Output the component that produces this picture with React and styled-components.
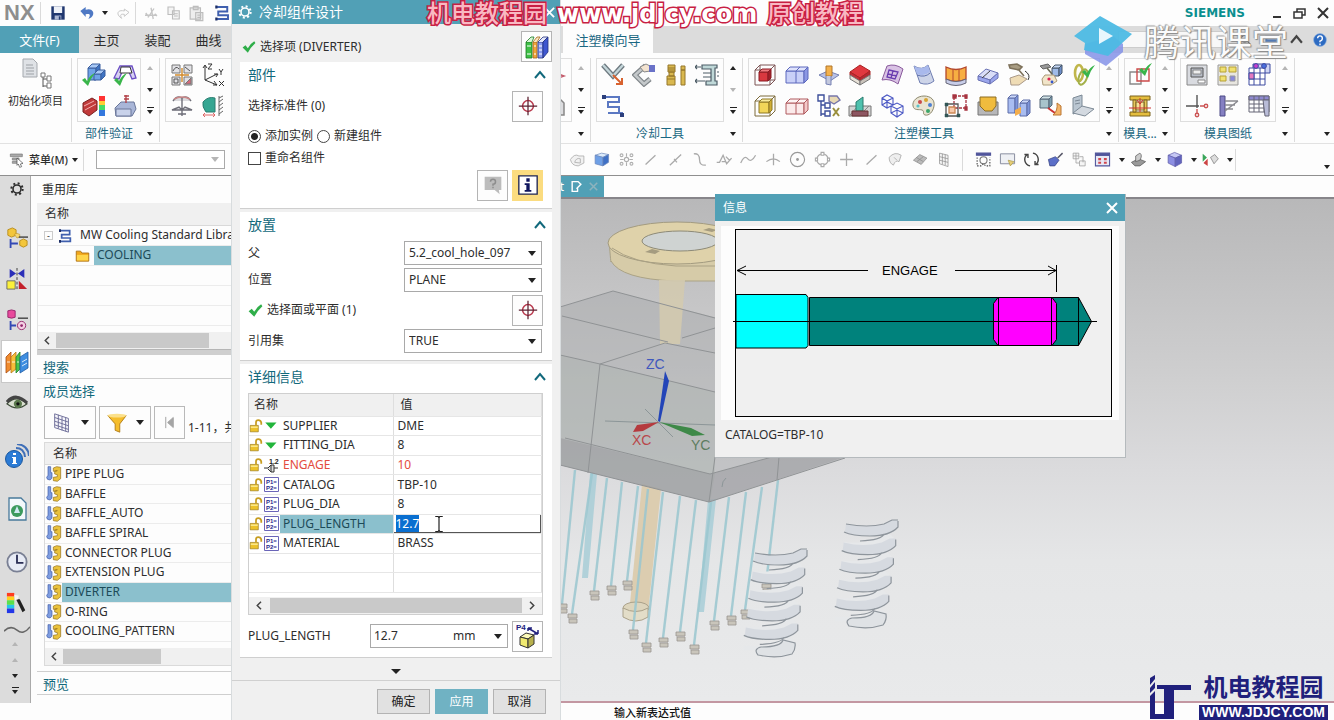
import React, { useEffect, useRef } from "react";
import styled, { createGlobalStyle, css } from "styled-components";

const teal = "#51a0b6";
const selectBlue = "#8bc0cd";
const titleInk = "#12697c";

const GlobalStyle = createGlobalStyle`
  * { box-sizing: border-box; }
  html, body { margin: 0; height: 100%; }
  body {
    font-family: "Noto Sans", "Noto Sans CJK SC", sans-serif;
    font-size: 12px;
    line-height: 16px;
    color: #2d2d2d;
    background: #fdfdfd;
  }
  button, input, select { font: inherit; color: inherit; margin: 0; padding: 0; }
  button { background: none; border: 0; display: flex; align-items: center; justify-content: center; }
  h2, p { margin: 0; font: inherit; }
`;

/* ---------- icons ---------- */

const Svg = styled.svg`
  display: block;
  flex: none;
`;

const Box = ({ x = 3, y = 8, w = 13, h = 12, d = 5, f = "#8fb0e8", t = "#b9d0f5", r = "#6f92d0", s = "#55618c" }) => (
  <g stroke={s} strokeWidth="1" strokeLinejoin="round">
    <rect x={x} y={y} width={w} height={h} fill={f} />
    <path d={`M${x} ${y}l${d} ${-d}h${w}l${-d} ${d}z`} fill={t} />
    <path d={`M${x + w} ${y}l${d} ${-d}v${h}l${-d} ${d}z`} fill={r} />
  </g>
);

const Tick = ({ x = 0, y = 0, c = "#39b54a" }) => (
  <path d={`M${x} ${y + 6}l3-2 2 3q3-6 8-8-5 6-7 13z`} fill={c} />
);

const books = (
  <g strokeWidth=".8">
    <path d="M1 7l5-5v17l-5 4z" fill="#f08c2e" stroke="#a84d13" />
    <path d="M6 7l5-5v17l-5 4z" fill="#f6bd3a" stroke="#b9771b" />
    <path d="M11 7l4-5v17l-4 4z" fill="#49c24b" stroke="#1f7d2b" />
    <path d="M15 7l8-5v16l-8 5z" fill="#3e8ee0" stroke="#235da5" />
    <path d="M2 12h3M7 12h3M12 12h2M17 12l5-3M17 16l5-3" stroke="#fff" />
  </g>
);

const drawings = {
  save: <g><path d="M4 4h16v16H4z" fill="#20376f" /><path d="M7 4h10v8H7z" fill="#eef1f7" /><path d="M8 15h8v5H8z" fill="#aeb9d4" /><path d="M13 16h2v4h-2z" fill="#20376f" /></g>,
  undo: <path d="M2 9l8-6v4c9-3 13 3 11 8-1 3-4 5-7 6 3-5 4-9-4-7v4z" fill="#4f79c4" />,
  redo: <path d="M21 11l-7-5v3c-8-2-11 2-9 6 1 2 3 4 5 5-2-4-3-7 4-6v3z" fill="none" stroke="#c9c9c9" strokeWidth="1.5" />,
  cut: <path d="M4 15h16M12 5l3 15M16 6L8 18M5 12l3 4M17 13l3 3" stroke="#c5c5c5" strokeWidth="1.8" fill="none" />,
  copy: <g fill="#f4f4f4" stroke="#bdbdbd" strokeWidth="1.5"><path d="M4 4h8v10H4zM10 9h9v11h-9z" /><path d="M12 13h5M12 16h5" /></g>,
  paste: <g fill="#eee" stroke="#bdbdbd" strokeWidth="1.5"><path d="M4 5h13v14H4zM8 3h6v4H8zM11 11h9v10h-9z" /><path d="M13 14h5M13 17h5" /></g>,
  cooling: <g fill="none" stroke="#3f5fae" strokeWidth="2.6"><path d="M4 4h15v6H7v5h13v5H4" /><path d="M3 4h3M3 20h3" stroke="#1e2f66" strokeWidth="4" /></g>,
  circuit: <g fill="none" stroke="#5b78c2" strokeWidth="2"><path d="M3 3h15v5H7v5h11v6H7M18 19h4" /><path d="M1 1h4v4H1zM19 19h4v4h-4z" fill="#2c3f7c" stroke="none" /></g>,
  gear: <g fill="none" stroke="currentColor"><circle cx="12" cy="12" r="6" strokeWidth="2.4" /><circle cx="12" cy="12" r="8.5" strokeWidth="3" strokeDasharray="3 3.67" /></g>,
  init: <g><path d="M3 1h10l4 4v14H3z" fill="#dfe2e6" stroke="#a5a9ae" /><path d="M6 7h7M6 10h8M6 13h8M6 16h8" stroke="#9da1a6" /><path d="M23 15v14M23 21h4M23 28h4" stroke="#555" fill="none" /><path d="M21 15h4v4h-4zM27 18h4v5h-4zM27 25h4v5h-4z" fill="#fff" stroke="#777" /></g>,
  partCheck: <g><Box x={6} y={5} w={8} h={12} d={4} f="#6fa3e6" r="#3f74c3" t="#a7c8f5" s="#3b5f9f" /><Box x={12} y={11} w={7} h={6} d={4} f="#6fa3e6" r="#3f74c3" t="#a7c8f5" s="#3b5f9f" /><Tick x={0} y={11} /></g>,
  draftCheck: <g><path d="M7 3h12l4 12-4 1-3-7H9l-3 7-5-1z" fill="#d7d0f3" stroke="#6c4fc4" strokeWidth="1.3" /><path d="M8 4h9l2 6H7z" fill="#fff" stroke="#333" /><Tick x={1} y={11} /></g>,
  heat: <g><path d="M1 9l9-5 5 3v9l-8 6-6-4z" fill="#c13a3a" stroke="#7b2020" /><path d="M2 12l10-5M3 16l11-6" stroke="#f3b0b0" /><path d="M17 2h6v5h-6z" fill="#f33" /><path d="M17 7h6v4h-6z" fill="#fc3" /><path d="M17 11h6v5h-6z" fill="#4d6" /><path d="M17 16h6v6h-6z" fill="#37d" /></g>,
  press: <g><path d="M2 14l6-6h13l2 7-4 7H3z" fill="#a9b6d8" stroke="#6a7799" /><path d="M3 15h15v7H3z" fill="#c9d2ea" stroke="#6a7799" /><path d="M13 1v8M11 2h5M11 5h5" stroke="#b3434a" strokeWidth="1.4" /></g>,
  layout: <g fill="#e2e2e6" stroke="#777"><path d="M2 2h8v8H2zM14 2h8v8h-8zM2 14h8v8H2zM14 14h8v8h-8z" /><path d="M3 8q3-6 6-2M15 4l5 4M4 16h4v4H4z" stroke="#555" fill="none" /><path d="M15 21l6-6v6z" fill="#d46a7a" /><path d="M12 5v14M5 12h14" stroke="#d18a2c" strokeWidth="1.4" /></g>,
  csys: <g fill="none" stroke="#333"><path d="M4 17V3M2 5l2-3 2 3M4 17l12-6M13 11h4l-2 3M4 17l12 5M13 18l3 4h-4" /><path d="M7 1h4l-4 5h4M18 6l2 3 2-3M20 9v3M18 18l5 5M23 18l-5 5" /></g>,
  balance: <g fill="none" stroke="#6e6e78" strokeWidth="1.4"><path d="M12 3v19M3 7q4-6 9-3 5-3 9 3M2 16l7-3 3 3 3-3 7 3zM8 20h8" fill="#d9d9dd" /><path d="M4 5q8-4 16 0" stroke="#c88" /></g>,
  wall: <g><path d="M2 8q5-6 12-4v14H5q-4-5-3-10z" fill="#35a692" stroke="#2c7d70" /><path d="M18 2v20M18 4l4-2M18 8l4-3M18 12l4-3M18 16l4-3M18 20l4-3" stroke="#666" /><path d="M2 21h12M4 19l-2 2 2 2M12 19l2 2-2 2" stroke="#d66" fill="none" /></g>,
  redArrow: <path d="M10 9l11 4-11 4z" fill="#fff" stroke="#c35c6c" strokeWidth="1.5" />,
  house: <path d="M11 21V10l6-5 4 4v12z" fill="#dcdcdf" stroke="#888" strokeWidth="1.5" />,
  pipeX: <g fill="none"><path d="M2 2l10 11L22 2" stroke="#6e7a80" strokeWidth="5" /><path d="M2 2l10 11L22 2" stroke="#c4d6da" strokeWidth="2.4" /><path d="M12 12l9 9M21 15v6h-6" stroke="#d8622f" strokeWidth="2" /></g>,
  elbow: <g fill="none"><path d="M16 7L12 4 3 12l9 9 6-5" stroke="#7f8589" strokeWidth="5" /><path d="M16 7L12 4 3 12l9 9 6-5" stroke="#c4c8ca" strokeWidth="2.6" /><path d="M8 4l6-3 4 2v5l-6 1z" fill="#f3e3d0" stroke="#888" /><path d="M17 2h6v7h-6z" fill="#6a72c8" /></g>,
  plugs: <g fill="#d9b84f" stroke="#95772a"><path d="M4 2h7v7H4zM5 9h5v4H5zM3 13h8v9H3zM17 3h4v4h-4zM17 7h4v15h-4z" /><path d="M4 5h7M4 7h7M3 16h8" /></g>,
  valve: <g fill="none" stroke="#4d5c66" strokeWidth="1.2"><path d="M7 2h15v3h-2v13h2v4H11v-4h5V6H7z" fill="#bfd8d8" /><path d="M0 4h6M0 18h10M2 2L0 4l2 2M2 16l-2 2 2 2M8 10h8M8 14h8M22 9h2M22 13h2" /></g>,
  boxRed: <g fill="none" stroke="#7c5454"><path d="M2 7h15v15H2zM2 7l5-5h15v15l-5 5M22 2l-5 5M7 2v15M7 17h15" /><Box x={6} y={9} w={9} h={9} d={3} f="#d9383f" t="#ef7a7e" r="#a3202a" s="#8a1d25" /></g>,
  boxGold: <g fill="none" stroke="#7c6a3a"><path d="M2 7h15v15H2zM2 7l5-5h15v15l-5 5M22 2l-5 5" /><Box x={6} y={8} w={10} h={11} d={3} f="#f2d659" t="#f9eb9c" r="#d0ae34" s="#8d7724" /></g>,
  splitBlue: <g><Box x={1} y={8} w={18} h={12} d={4} f="#c9d0f8" t="#dfe3fc" r="#8b97e4" s="#5c68bd" /><path d="M11 20V8l4-4" stroke="#5c68bd" fill="none" /></g>,
  splitRed: <g><Box x={1} y={9} w={18} h={11} d={4} f="#fbeaea" t="#fdf3f3" r="#f3c9c9" s="#b05a5f" /><path d="M11 20V9l4-4" stroke="#b05a5f" fill="none" /></g>,
  cross: <g><path d="M2 12l9-4 11 4-9 6z" fill="#b9c2e6" stroke="#7681b4" /><path d="M9 3h6v10H9z" fill="#f3b14c" stroke="#b2762a" /><path d="M9 13v8l5 1v-9" fill="#c3c8dd" stroke="#7681b4" /></g>,
  tree: <g fill="#fff" stroke="#3d4f9b" strokeWidth="1.4"><path d="M4 6v16M4 11h4M4 20h4" /><path d="M1 1h6v6H1zM8 9h5v5H8zM8 17h5v5H8z" /><path d="M12 2h8l3 4-6 4-5-3z" fill="#e8d9b4" stroke="#77a" /><path d="M16 14l6 8M22 14l-6 8" stroke="#9a8f3d" strokeWidth="2" /></g>,
  redTop: <g stroke="#777"><path d="M2 9l10-7 10 6-10 7z" fill="#e0383f" stroke="#a22" /><path d="M2 9v3l10 6v-3z" fill="#c3303a" stroke="#a22" /><path d="M22 8v4l-10 6v-3z" fill="#b22a34" stroke="#a22" /><path d="M2 12v4l10 6v-4z" fill="#e8e2d8" /><path d="M22 12v4l-10 6v-4z" fill="#c9c3bb" /></g>,
  insert: <g><path d="M1 12h22v10H1z" fill="#d4d4d4" stroke="#777" /><path d="M2 21l8-9M12 21l9-9" stroke="#888" /><path d="M8 17V8l7-5v14z" fill="#4fc1ae" stroke="#2a7c6f" /><path d="M4 17h16v5H4z" fill="#8d5662" stroke="#633" /></g>,
  patch: <g><path d="M7 3q8-3 16 3l-5 15Q10 15 2 17z" fill="#d9c2e4" stroke="#8a5b9d" /><path d="M9 7l9 2-3 7-8-2zM13 8l-2 7M8 11l9 2" fill="none" stroke="#6b3db0" strokeWidth="1.3" /></g>,
  wire: <g fill="none" stroke="#4b58c4" strokeWidth="1.1"><path d="M2 4l5-3 6 3v7l-6 3-5-3zM2 4l5 3 6-3M7 7v7M2 11l5-3 6 3M11 12l6-3 6 3v7l-6 4-6-4zM11 12l6 3 6-3M17 15v8M11 19l6-3 6 3" /></g>,
  surface: <g><path d="M2 3q8 5 14-1l6 16q-6 5-14 2z" fill="#cdd4e8" stroke="#6f7eb2" /><path d="M5 12q8 3 13-2" stroke="#5d6fae" fill="none" /><path d="M2 3q8 5 14-1l2 7q-7 5-13 2z" fill="#a9b9ec" /></g>,
  palette: <g><path d="M12 2c7 0 11 4 10 10s-5 10-9 9c-3-1 0-4-3-5s-8 1-9-4S5 2 12 2z" fill="#e9e4d2" stroke="#8d896f" /><circle cx="8" cy="8" r="2" fill="#c94b4b" /><circle cx="14" cy="6" r="2" fill="#d7a534" /><circle cx="18" cy="11" r="2" fill="#4e80d1" /><circle cx="16" cy="17" r="2" fill="#3da66a" /><circle cx="6" cy="12" r="1.6" fill="#5cc2c9" /></g>,
  fence: <g><path d="M2 4q10 5 20 0v12q-10 5-20 0z" fill="#f7ae42" stroke="#b3472c" strokeWidth="1.3" /><path d="M2 16q10 5 20 0v4q-10 5-20 0z" fill="#c8cde8" stroke="#667" /><path d="M9 6v12M15 6v12" stroke="#b3472c" /></g>,
  refsq: <g fill="none" stroke="#a73440" strokeWidth="1.3"><path d="M10 2h12v12H10z" strokeDasharray="3 1" /><path d="M2 10h12v12H2z" stroke="#555" /><path d="M5 13h6v6H5z" fill="#f7c8a9" stroke="#c85" /><path d="M9 1h3v3H9zM21 1h2v3h-2zM21 13h2v3h-2z" fill="#a73440" /><path d="M1 9h3v3H1zM1 20h3v3H1zM13 20h3v3h-3z" fill="#355" stroke="#355" strokeWidth=".5" /></g>,
  slab: <g><path d="M2 13l8-7 12 4-8 7z" fill="#d9ddf7" stroke="#6b73b5" /><path d="M2 13v4l12 4v-4zM14 17v4l8-6v-5z" fill="#9ba6ec" stroke="#6b73b5" /><path d="M6 15l8-7" stroke="#444" /></g>,
  block: <g><path d="M2 8h20v13H2z" fill="#b7b7b9" stroke="#777" /><path d="M4 3h16v9l-4 5H9l-5-5z" fill="#f0bc3e" stroke="#8c6c22" /></g>,
  hammer: <g><path d="M2 2l8-1 5 3-3 3-9-2zM11 6l6 7" stroke="#7e725b" strokeWidth="1.6" fill="#a99d83" /><path d="M3 15l9-3 8 4-8 6H4z" fill="#efdcb5" stroke="#a98" /><path d="M18 8q6 4 3 9" stroke="#333" fill="none" /></g>,
  solids: <g><Box x={1} y={4} w={7} h={15} d={3} f="#a9bdf1" t="#ccd8f9" r="#7e95da" s="#5d6da8" /><Box x={13} y={9} w={7} h={13} d={3} f="#a9bdf1" t="#ccd8f9" r="#7e95da" s="#5d6da8" /><path d="M8 16l6-3v6l-6 3z" fill="#f3ae4d" /></g>,
  hammerCube: <g><Box x={13} y={5} w={7} h={8} d={3} f="#9fbbe8" t="#c7d9f6" r="#6e8ec9" s="#456" /><path d="M1 3l8-2 3 3-8 2z" fill="#999" stroke="#666" /><path d="M8 5l5 6" stroke="#665" strokeWidth="1.6" /><path d="M6 12h9l3 6-6 4H4l-1-6z" fill="#f1e5c9" stroke="#a97" /><circle cx="10" cy="16" r="1.6" fill="#d25" /><circle cx="13" cy="19" r="1.4" fill="#35c" /></g>,
  cubeArrow: <g><Box x={1} y={5} w={9} h={9} d={3} f="#a8c4cc" t="#d1e2e6" r="#7d9fb0" s="#567" /><path d="M9 14l7 5" stroke="#c33" strokeWidth="2" /><path d="M18 9l4 3v9h-8q5-4 4-12z" fill="#f3b56a" stroke="#b73" /></g>,
  linkCheck: <g fill="none"><ellipse cx="8" cy="10" rx="4" ry="8" stroke="#c0b64b" strokeWidth="2.6" /><ellipse cx="12" cy="14" rx="4" ry="8" stroke="#a3b04a" strokeWidth="2" transform="rotate(20 12 14)" /><Tick x={11} y={3} /></g>,
  greyPlates: <g stroke="#7d8a96"><path d="M2 4l9-3v16l-9 3z" fill="#bac6d1" /><path d="M11 12l12 3-9 7-12-3z" fill="#d3d9e0" /><path d="M4 7l5-1M4 10l5-1" /></g>,
  subCheck: <g fill="none" strokeWidth="1.4"><path d="M2 9h11v12H2z" stroke="#888" /><path d="M9 6h12v12H9z" stroke="#cc4a4a" /><Tick x={11} y={1} /></g>,
  moldbase: <g stroke="#7d6420"><path d="M2 2h20v4H2zM2 18h20v4H2z" fill="#e4bd3d" /><path d="M5 6h3v12H5zM16 6h3v12h-3z" fill="#e8c85d" /><path d="M8 8h8v8H8z" fill="#f6e29a" /><path d="M9 6l3 4 3-4M12 4v14M1 14h22" stroke="#c33" fill="none" /></g>,
  sheet1: <g stroke="#888" fill="#d9dbe0"><path d="M2 2h20v20H2z" /><path d="M6 5h12v9H6z" fill="#b7bcc6" stroke="#555" /><path d="M8 7h8v4H8z" fill="#eee" /><path d="M13 17h7v3h-7z" fill="#fff" /></g>,
  sheet2: <g stroke="#999" fill="#e8e6e0"><path d="M2 2h20v20H2z" /><path d="M4 4h6v5H4zM13 4h7v5h-7zM4 13h6v5H4z" fill="#f0e070" stroke="#b5a035" /><path d="M14 13h5v5h-5z" fill="#88d" /></g>,
  sheet3: <g stroke="#3c4aa0" fill="#fff"><path d="M6 1h17v9H6z" fill="#cfd5f4" /><path d="M2 5h16v17H2zM2 10h16M2 16h16M7 5v17M13 5v17" /><path d="M2 10h5v6H2z" fill="#e37ac0" /><circle cx="9" cy="3" r="2.4" fill="#c83dd0" /><circle cx="17" cy="3" r="2.4" fill="#4a6fe0" /></g>,
  crossO: <g fill="none" stroke="#777" strokeWidth="1.4"><path d="M1 12h13M12 1v13" stroke="#555" /><path d="M15 12h4M12 15v4" stroke="#c55" /><circle cx="21" cy="12" r="1.7" stroke="#c55" /><circle cx="12" cy="21" r="1.7" stroke="#c55" /></g>,
  ladder: <g><path d="M4 2h5v20H4z" fill="#8580c2" stroke="#4c4a86" /><path d="M9 7h13M9 11h10M9 15h8M22 7L9 17" stroke="#8a8a90" strokeWidth="1.4" fill="none" /></g>,
  grid: <g stroke="#667" fill="#fff"><path d="M2 2h20v16H2z" /><path d="M2 2h20v4H2z" fill="#8f8ad0" /><path d="M2 10h20M2 14h20M7 2v16M12 2v16M17 2v16" /><path d="M16 6h6v16h-4z" fill="#b9bcd8" /></g>,
  search: <g fill="none" stroke="#666" strokeWidth="2"><circle cx="10" cy="10" r="5" /><path d="M14 14l5 5" /></g>,
  monitor: <g><path d="M2 5h20v12H2z" fill="#4f79b5" /><path d="M5 8h14v3H5z" fill="#cfe0f5" /><path d="M9 17h6v3H9z" fill="#667" /></g>,
  help: <g><circle cx="12" cy="12" r="11" fill="#2d6bc2" stroke="#8fb3e2" /><path d="M8 9q0-4 4-4t4 4-4 5v2M12 18v3" stroke="#fff" strokeWidth="2.4" fill="none" /></g>,
  menu: <g fill="#aaa" stroke="#777"><path d="M2 3h18v4H2z" /><path d="M5 9h10v3H5zM5 14h8v3H5z" /><path d="M12 9l9 8-4 1 2 4-3 1-2-5-2 2z" fill="#fff" stroke="#444" /></g>,
  /* selection bar */
  sGhost: <path d="M2 12q6-9 12-5h7v10l-8 4q-9 0-11-9zM8 16q2-7 8-5v6z" fill="#f1f1f1" stroke="#a2a2a2" />,
  sCube: <g stroke="#6a86bb"><path d="M3 6l9-3 10 2-8 4z" fill="#dcebfb" /><path d="M3 6l11 3v12L3 18z" fill="#6fa0e6" /><path d="M14 9l8-4v11l-8 5z" fill="#3f70c5" /></g>,
  sSnap: <g fill="none" stroke="#b0b0b0" strokeWidth="1.6"><circle cx="12" cy="12" r="3" /><circle cx="5" cy="6" r="2" /><circle cx="19" cy="6" r="2" /><circle cx="5" cy="18" r="2" /><circle cx="19" cy="18" r="2" /><path d="M12 3v5M12 16v5M3 12h5M16 12h5" /></g>,
  sLine: <path d="M5 19L19 6" stroke="#aaa" strokeWidth="1.8" />,
  sMid: <path d="M4 20L20 5M10 11l4 5" stroke="#aaa" strokeWidth="1.8" />,
  sCurve: <path d="M4 4q8-1 8 8t9 8" stroke="#aaa" strokeWidth="1.8" fill="none" />,
  sSpline: <path d="M1 16h4l5-10 5 12 7-8M8 15h6M14 8l5 5" stroke="#aaa" strokeWidth="1.8" fill="none" />,
  sWave: <path d="M1 17q5-12 10-6t11-5" stroke="#aaa" strokeWidth="1.8" fill="none" />,
  sPeak: <path d="M2 15q10-8 19 0M12 4v16" stroke="#aaa" strokeWidth="1.8" fill="none" />,
  sCenter: <g><circle cx="12" cy="12" r="10" fill="none" stroke="#999" strokeWidth="1.6" /><circle cx="12" cy="12" r="2" fill="#999" /></g>,
  sQuad: <g fill="none" stroke="#aaa" strokeWidth="1.6"><circle cx="12" cy="12" r="8" /><path d="M10 2h4v4h-4zM10 18h4v4h-4zM2 10h3v4H2zM19 10h3v4h-3z" fill="#fff" /></g>,
  sPlus: <path d="M3 12h18M12 3v18" stroke="#aaa" strokeWidth="1.8" />,
  sFace: <g fill="#eee" stroke="#aaa" strokeWidth="1.2"><path d="M3 9q8-9 17-3l-3 9q-5-3-8 5-6-3-6-11z" /><path d="M10 9l4 4" /></g>,
  sPlane: <path d="M2 13l9-8 10 5-8 9zM6 9l10 6M7 15l9-7" fill="#bbb" stroke="#8b8b8b" />,
  sGrid: <path d="M5 3l12 3v16L5 18zM5 8l12 3M5 13l12 3M9 4v15M13 5v15" fill="#f5f5f5" stroke="#8c8c8c" />,
  vFit: <g fill="none" stroke="#50559b" strokeWidth="1.5"><path d="M2 3h20v3H2z" fill="#50559b" /><circle cx="12" cy="13" r="5" stroke="#777" /><path d="M3 9v12h6l3-3 3 3h6V9" strokeDasharray="2 2" stroke="#444" /></g>,
  vWin: <g><path d="M2 4h20v14H2z" fill="#eef0f4" stroke="#8a8fa0" strokeWidth="1.4" /><path d="M13 13l8 2-5 6z" fill="#e7ce79" stroke="#a94" /></g>,
  vRot: <path d="M10 21A9 9 0 0 1 6 5M14 3a9 9 0 0 1 4 16M2 5h5v5M22 19h-5v-5" fill="none" stroke="#444" strokeWidth="2" />,
  vBrush: <g><path d="M2 12l10-4 5 5-6 8H4z" fill="#5b6fc8" stroke="#34407e" /><path d="M15 10l7-7" stroke="#556" strokeWidth="2" /></g>,
  vTree: <path d="M3 3h8v8H3zM12 8h5v8M7 11v6h5M12 14h8v7h-8zM3 7h8M7 3v8" fill="#f5f5f5" stroke="#999" />,
  vGrid: <g><path d="M2 3h20v18H2z" fill="#e7e8f5" stroke="#50559b" strokeWidth="1.5" /><path d="M2 3h20v4H2z" fill="#50559b" /><path d="M6 10h4v3H6zM14 10h4v3h-4zM6 15h4v3H6zM14 15h4v3h-4z" fill="#d0454d" /></g>,
  vSolid: <g stroke="#555"><path d="M2 16l10-5 10 4-8 6H7z" fill="#999" /><path d="M8 15V7l6-4q4 3 0 10z" fill="#ccc" /></g>,
  vCube: <g stroke="#5d5ba8"><path d="M3 6l9-4 10 4-9 4z" fill="#c6c8f4" /><path d="M3 6l10 4v12l-10-5z" fill="#8c8ee2" /><path d="M13 10l9-4v11l-9 5z" fill="#6264bd" /></g>,
  vMove: <g><path d="M1 4l6 5-6 6z" fill="#3aa65a" /><path d="M2 17l6-6v10z" fill="#c44" /><path d="M12 9l6-4 5 6-6 7z" fill="#ddd" stroke="#777" /></g>,
  /* resource bar */
  rAsm: <g><path d="M2 3l5-2 4 2v6l-5 2-4-2z" fill="#f3c63c" stroke="#b98c1a" /><path d="M15 15l4-2 4 2v5l-4 2-4-2z" fill="#f3c63c" stroke="#b98c1a" /><path d="M9 8l3-1 3 1v3l-3 1z" fill="#f5d773" stroke="#b98c1a" strokeWidth=".6" /><path d="M5 13v10M5 18h8" stroke="#3349b5" strokeWidth="2" /><path d="M14 11h10" stroke="#333" strokeWidth="1.4" /></g>,
  rCon: <g><path d="M4 1l7 5-7 5zM20 1l-7 5 7 5z" fill="#2b2fb8" /><path d="M12 0v24" stroke="#333" strokeDasharray="3 2" /><path d="M1 14h9v9H1z" fill="#fbf03a" stroke="#666" /><path d="M14 14l9 9h-9z" fill="#c3202a" /></g>,
  rPart: <g><path d="M2 2q4-2 8 0v7q-4 2-8 0z" fill="#e84a9c" stroke="#93256a" /><path d="M13 10h11" stroke="#333" strokeWidth="1.4" /><path d="M5 13v10M5 18h6" stroke="#3349b5" strokeWidth="2" /><circle cx="17" cy="18" r="4.5" fill="#f4d0e4" stroke="#93256a" /><circle cx="17" cy="18" r="1.5" fill="#93256a" /></g>,
  rBooks: books,
  rEye: <g><path d="M1 14q10-11 22 0-11 9-22 0z" fill="#d9dfd0" stroke="#3d4b38" strokeWidth="1.3" /><circle cx="13" cy="14" r="4.5" fill="#5b7a4d" /><circle cx="13" cy="14" r="1.8" fill="#111" /><path d="M1 12Q11 1 23 13" stroke="#444" strokeWidth="3.4" fill="none" /></g>,
  rInfo: <g><circle cx="9" cy="15" r="8.5" fill="#2b7bd5" stroke="#1b589f" /><path d="M8 9h3v2H8zM7 13h4v6h1v1H7v-1h1v-5H7z" fill="#fff" /><path d="M11 4q8 0 9 9M12 0q11 1 12 12" fill="none" stroke="#3f6fb8" strokeWidth="2" /></g>,
  rPage: <g><path d="M4 1h12l5 5v17H4z" fill="#f3f8fb" stroke="#48799b" strokeWidth="1.3" /><circle cx="12" cy="14" r="6" fill="#3c9a5e" /><path d="M12 9l3 7H9z" fill="#cfe9f3" /></g>,
  rClock: <g><circle cx="12" cy="12" r="10.5" fill="#e7ebf5" stroke="#7a8094" strokeWidth="2" /><path d="M12 4v9h7" stroke="#2a2e55" strokeWidth="2" fill="none" /></g>,
  rColor: <g><path d="M1 1h8v4H1z" fill="#ff3b1f" /><path d="M1 5h8v4H1z" fill="#ffd21f" /><path d="M1 9h8v5H1z" fill="#5be04a" /><path d="M1 14h8v4H1z" fill="#23c7e8" /><path d="M1 18h8v5H1z" fill="#2337e8" /><path d="M11 8l4 0 6 12-3 2z" fill="#222" /><path d="M9 3l5 1-1 4-3 1z" fill="#f5f5f5" /></g>,
  rWave: <path d="M0 14q6-6 12-1t12-3" fill="none" stroke="#666" strokeWidth="1.4" />,
  folder: <g><path d="M2 5h7l2 3h11v13H2z" fill="#f2a71b" stroke="#a86f12" strokeWidth="1.4" /><path d="M3 11h18v9H3z" fill="#ffd54a" /></g>,
  tableBtn: <path d="M4 2l15 5v15L4 17zM4 6l15 5M4 10l15 5M4 14l15 5M8 3v15M12 5v15M16 6v15" fill="#f6f6fb" stroke="#6a6a96" />,
  filter: <g><path d="M2 4h20l-7 9v9l-5-2v-7z" fill="#f5bd2c" stroke="#b07b15" /><ellipse cx="12" cy="4" rx="10" ry="2" fill="#fbe08a" /></g>,
  first: <path d="M6 3v18M18 4l-9 8 9 8z" fill="#a5a5a5" stroke="#a5a5a5" strokeWidth="1.6" />,
  part: <g><path d="M3 1h4v9h2v5q1 4-3 6-5 0-5-4l2-3z" fill="#7d9ce0" stroke="#3f5ba8" /><path d="M11 3l5-2 6 1v17l-5 4-6-1v-5l6-1v-3l-4-1v-4l4-1V7l-6 1z" fill="#eac23c" stroke="#8f6d18" /></g>,
  lock: <g><path d="M2 11h14v11H2z" fill="#ecc22c" stroke="#8c6d15" /><path d="M12 11V6q0-4 4-4t5 4v4" fill="none" stroke="#c79d21" strokeWidth="3" /><path d="M3 14h12" stroke="#fff3a8" strokeWidth="2" /></g>,
  greenDown: <path d="M2 7h18l-9 10z" fill="#22b53b" />,
  books2: <g strokeWidth=".8"><path d="M1 7h6v16H1z" fill="#3fc046" stroke="#1d7a25" /><path d="M1 7l5-5h3L7 7" fill="#d8f5d5" stroke="#1d7a25" /><path d="M8 7h4v16H8z" fill="#f0a53a" stroke="#a3681c" /><path d="M8 7l4-5h3l-3 5" fill="#fbe6bf" stroke="#a3681c" /><path d="M13 7h5v16h-5z" fill="#8c9cf0" stroke="#22307f" /><path d="M13 7l5-5h5l-5 5" fill="#e3e7fb" stroke="#22307f" /><path d="M18 7l5-5v15l-5 6z" fill="#3f57d0" stroke="#22307f" /><path d="M2 11h4M2 19h4M9 11h2M9 19h2M14 11h3M14 15h3M14 19h3" stroke="#fff" strokeWidth="1.2" /></g>,
  check: <path d="M1 13l5-4 4 5Q14 6 21 2l2 3Q15 12 10 22z" fill="#2fae49" />,
  target: <g fill="none"><circle cx="12" cy="12" r="6.5" stroke="#b8384c" strokeWidth="1.8" /><path d="M1 12h22M12 1v22" stroke="#5b2030" strokeWidth="1.5" /></g>,
  question: <g><path d="M2 2h20v16h-3l1 5-6-5H2z" fill="#bcbcbc" /><path d="M9 8q0-3 3-3t3 3-3 3v2M12 14v2" stroke="#8d8d8d" strokeWidth="1.8" fill="none" /></g>,
  info: <g><path d="M1 1h22v22H1z" fill="#fff" stroke="#1e2452" strokeWidth="1.6" /><path d="M10 4h4v4h-4zM8 10h6v8h2v2H8v-2h2v-6H8z" fill="#10165e" /></g>,
  docEdit: <g fill="none" stroke="#fff" strokeWidth="2.6"><path d="M15 21H4V3h11l4 4M14 15v6M12 16l9-9" /></g>,
  cursor: <path d="M7 2h4l1 2 1-2h4M12 4v16M7 22h4l1-2 1 2h4" fill="none" stroke="#222" strokeWidth="1.6" />,
};

const Icon = ({ name, size = 24, box = 24 }) => (
  <Svg width={size} height={size} viewBox={`0 0 ${box} ${box}`} aria-hidden="true">{drawings[name]}</Svg>
);

const Caret = styled.span`
  flex: none;
  width: 0;
  height: 0;
  border: 3px solid transparent;
  border-top: 4px solid ${(p) => (p.$dim ? "#b5b5b5" : "#222")};
  border-bottom: 0;
  ${(p) => p.$up && css`transform: rotate(180deg);`}
  ${(p) => p.$mid && css`border-width: 5px 4px 0;`}
  ${(p) => p.$big && css`border-width: 5px 5px 0;`}
`;

const MoreCaret = styled(Caret)`
  position: relative;
  &::before {
    content: "";
    position: absolute;
    left: -3px;
    top: -7px;
    width: 7px;
    height: 1px;
    background: #222;
  }
`;

const Rule = styled.span`
  flex: none;
  width: 1px;
  height: ${(p) => p.$h || 22}px;
  background: #dadada;
`;

/* ---------- frame ---------- */

const Window = styled.div`
  position: relative;
  display: flex;
  flex-direction: column;
  min-height: 100vh;
  overflow: hidden;
`;

const TitleBar = styled.header`
  display: flex;
  align-items: center;
  height: 26px;
  padding-left: 4px;
`;

const Brand = styled.span`
  width: 36px;
  font: bold 22px/24px "Liberation Sans", sans-serif;
  color: #8e8e8e;
`;

const QuickButton = styled.button`
  width: ${(p) => p.$w || 24}px;
  height: 24px;
`;

const Push = styled.span`
  flex: 1;
`;

const Siemens = styled.span`
  margin-right: 20px;
  font: bold 12px/24px "DejaVu Sans", sans-serif;
  color: #0b8f8f;
`;

const WinButton = styled.button`
  width: 23px;
  height: 24px;
  color: #333;
`;

const TabBar = styled.nav`
  display: flex;
  align-items: stretch;
  height: 27px;
  background: #dcdcdc;
`;

const RibbonTab = styled.button`
  width: ${(p) => p.$w || 51}px;
  font-size: 13px;
  ${(p) => p.$file && css`background: ${teal}; color: #fff; margin-right: 2px;`}
  ${(p) => p.$active && css`background: #fdfdfd; color: #1a6782;`}
`;

const CoveredTabs = styled.div`
  width: 329px;
`;

const TabTools = styled.div`
  display: flex;
  align-items: center;
  gap: 10px;
  padding-right: 7px;
`;

const FindBox = styled.input`
  width: 110px;
  height: 17px;
  padding: 0 6px;
  border: 1px solid #ccc;
  background: #f8f8f8;
`;

const Ribbon = styled.section`
  display: flex;
  height: 91px;
  padding-top: 5px;
  border-bottom: 1px solid #e2e2e2;
`;

const LaunchButton = styled.button`
  flex-direction: column;
  justify-content: flex-start;
  gap: 3px;
  width: 72px;
  height: 84px;
  border-right: 1px solid #dcdcdc;
  font-size: 11px;
`;

const Group = styled.div`
  display: grid;
  grid-template-columns: ${(p) => p.$w}px 18px;
  grid-template-rows: 64px 16px;
  row-gap: 4px;
  height: 84px;
  padding-left: 5px;
  border-right: 1px solid #dcdcdc;
`;

const Gallery = styled.div`
  display: grid;
  grid-template-columns: repeat(${(p) => p.$cols}, 1fr);
  grid-auto-rows: 31px;
  border: 1px solid #dedede;
  overflow: hidden;
`;

const Tool = styled.button`
  min-width: 0;
  height: 31px;
`;

const Steps = styled.div`
  display: flex;
  flex-direction: column;
  align-items: center;
  justify-content: space-between;
  padding: 8px 0 8px;
`;

const GroupLabel = styled.span`
  margin: 0 -6px;
  text-align: center;
  color: #1a6782;
  white-space: nowrap;
`;

const Center = styled.span`
  display: flex;
  align-items: center;
  justify-content: center;
`;

const BarEnd = styled.span`
  display: flex;
  align-items: flex-end;
  height: ${(p) => p.$h}px;
  margin-left: auto;
  padding: 0 4px 6px 0;
`;

const RibbonGroup = ({ label, tools, cols, w, up }) => (
  <Group $w={w || cols * 32}>
    <Gallery $cols={cols}>
      {tools.map((t, i) => (t ? <Tool key={i} aria-label={t}><Icon name={t} /></Tool> : <span key={i} />))}
    </Gallery>
    <Steps><Caret $up $dim={!up} /><Caret $dim={up} /><MoreCaret /></Steps>
    <GroupLabel>{label}</GroupLabel>
    <Center><Caret /></Center>
  </Group>
);

const SelectionBar = styled.section`
  display: flex;
  align-items: center;
  height: 32px;
  border-bottom: 1px solid #8f8f8f;
`;

const MenuButton = styled.button`
  gap: 4px;
  width: 84px;
  height: 22px;
  padding-left: 4px;
  border-right: 1px solid #dadada;
  font-size: 11px;
  font-weight: 500;
  white-space: nowrap;
`;

const SelectShell = styled.span`
  position: relative;
  display: flex;
  align-items: center;
  flex: none;
  width: ${(p) => p.$w}px;
  height: ${(p) => p.$h || 24}px;
  border: 1px solid #a9a9a9;
  background: #fff;
  ${Caret} { position: absolute; right: 5px; pointer-events: none; }
`;

const Select = styled.select`
  width: 100%;
  height: 100%;
  padding: 0 4px;
  border: 0;
  appearance: none;
  background: none;
`;

const FilterSlot = styled.div`
  width: 469px;
  padding-left: 12px;
`;

const SnapTools = styled.div`
  display: grid;
  grid-template-columns: repeat(16, minmax(0, 1fr));
  width: 392px;
  margin: 0 5px 0 12px;
`;

const ViewTools = styled.div`
  display: flex;
  align-items: center;
  padding-left: 8px;
`;

const SmallTool = styled.button`
  width: ${(p) => (p.$menu ? 36 : 24)}px;
  height: 24px;
  gap: 8px;
`;

/* ---------- work area ---------- */

const Work = styled.main`
  display: flex;
  flex: 1;
`;

const Rail = styled.nav`
  display: flex;
  flex-direction: column;
  align-items: center;
  flex: none;
  width: 31px;
  background: #dcdcdc;
  border-right: 1px solid #aaa;
`;

const RailButton = styled.button`
  width: 29px;
  height: ${(p) => p.$h}px;
  margin-bottom: ${(p) => p.$after || 0}px;
  padding-left: 2px;
  align-self: flex-end;
  ${(p) => p.$on && css`background: #fff; border: 1px solid #c8c8c8; border-right: 0;`}
`;

const RailSteps = styled(Steps)`
  height: 60px;
  padding: 2px 0 6px;
`;

const Library = styled.aside`
  flex: none;
  width: 529px;
  padding: 0 0 0 6px;
  background: #fdfdfd;
`;

const PanelTitle = styled.h2`
  height: 27px;
  padding: 6px 5px;
`;

const ListHead = styled.div`
  height: ${(p) => p.$h || 22}px;
  padding: 3px 8px;
  background: #f0f0f0;
  border-bottom: 1px solid #d9d9d9;
`;

const Tree = styled.div`
  display: flex;
  flex-direction: column;
  height: 124px;
  border-left: 1px solid #e3e3e3;
  border-bottom: 1px solid #b5b5b5;
`;

const TreeRow = styled.div`
  display: flex;
  align-items: center;
  gap: 4px;
  height: 20px;
  padding-left: ${(p) => p.$indent || 6}px;
  border-bottom: 1px solid #ececec;
  white-space: nowrap;
`;

const RowText = styled.span`
  flex: 1;
  align-self: stretch;
  padding: 1px 3px;
  white-space: nowrap;
  ${(p) => p.$on && css`background: ${selectBlue}; color: #1c4a58;`}
`;

const Toggle = styled.span`
  display: flex;
  align-items: center;
  justify-content: center;
  width: 9px;
  height: 9px;
  border: 1px solid #ccc;
  font-size: 9px;
  line-height: 8px;
`;

const Scroll = styled.div`
  display: flex;
  align-items: center;
  height: 17px;
  margin-top: auto;
  background: #f0f0f0;
`;

const ScrollArrow = styled.button`
  width: ${(p) => p.$w || 18}px;
  height: 17px;
`;

const Thumb = styled.span`
  width: ${(p) => p.$w};
  height: 15px;
  background: #c9c9c9;
`;

const SectionBar = styled.h2`
  height: ${(p) => p.$h || 24}px;
  padding: 4px 6px;
  border-top: ${(p) => p.$top || 1}px solid #cfcfcf;
  font-size: 13px;
  color: ${titleInk};
`;

const MemberTools = styled.div`
  display: flex;
  align-items: center;
  gap: 3px;
  height: 35px;
  padding-left: 7px;
`;

const DropButton = styled.button`
  gap: 8px;
  width: ${(p) => p.$w || 52}px;
  height: 33px;
  border: 1px solid #b9b9b9;
`;

const Count = styled.span`
  align-self: flex-end;
  padding-bottom: 4px;
`;

const Members = styled.div`
  display: flex;
  flex-direction: column;
  height: 224px;
  margin: 2px 0 5px 7px;
  border: 1px solid #dadada;
`;

const MemberRows = styled.div`
  display: flex;
  flex-direction: column;
  height: 177px;
`;

const MemberRow = styled.div`
  display: flex;
  flex: 1;
  align-items: center;
  padding-left: 1px;
  border-bottom: 1px solid #ececec;
`;

const Stage = styled.section`
  display: flex;
  flex-direction: column;
  flex: 1;
  min-width: 0;
`;

const DocTabs = styled.div`
  display: flex;
  height: 23px;
  border-bottom: 2px solid #87858a;
`;

const DocTab = styled.button`
  gap: 6px;
  justify-content: flex-end;
  width: 44px;
  height: 21px;
  padding-right: 6px;
  background: ${teal};
  color: #fff;
`;

const Canvas = styled.div`
  flex: 1;
  min-height: 499px;
  overflow: hidden;
  background: linear-gradient(#b8b8b9, #cfcfd0 36%, #dbdbdd 54%, #e5e6e7 72%, #e9eaeb);
  border-bottom: 2px solid #c397a2;
`;

const StatusBar = styled.footer`
  display: flex;
  align-items: center;
  height: 20px;
  padding-left: 614px;
  font-size: 11px;
  font-weight: 500;
  color: #111;
`;

/* ---------- dialogs ---------- */

const Dialog = styled.section`
  position: absolute;
  left: 231px;
  top: 0;
  bottom: 0;
  width: 330px;
  display: flex;
  flex-direction: column;
  background: #f0f0f0;
  border: solid #d8dcde;
  border-width: 0 1px;
`;

const DialogTitle = styled.div`
  display: flex;
  align-items: center;
  gap: 6px;
  height: 24px;
  padding: 0 5px;
  background: ${teal};
  color: #fff;
  font-size: 14px;
`;

const PickRow = styled.div`
  display: flex;
  align-items: center;
  gap: 4px;
  height: 38px;
  padding: 7px 8px 0 10px;
`;

const Section = styled.div`
  margin: 0 8px 3px;
  padding: 0 9px ${(p) => (p.$flush ? 0 : 6)}px 8px;
  background: #fff;
  border-bottom: 1px solid #cfcfcf;
`;

const SectionTitle = styled.button`
  justify-content: space-between;
  width: calc(100% + 3px);
  height: 26px;
  font-size: 14px;
  color: ${titleInk};
`;

const FormRow = styled.div`
  display: flex;
  align-items: center;
  justify-content: ${(p) => (p.$end ? "flex-end" : "flex-start")};
  gap: 4px;
  height: ${(p) => p.$h || 26}px;
`;

const FieldLabel = styled.label`
  display: flex;
  align-items: center;
  gap: 4px;
  width: ${(p) => (p.$w ? p.$w + "px" : "auto")};
`;

const SquareButton = styled.button`
  flex: none;
  width: 31px;
  height: 31px;
  background: ${(p) => (p.$lit ? "#fbdc80" : "#fdfdfd")};
  border: 1px solid ${(p) => (p.$lit ? "#fbdc80" : "#b4b4b4")};
`;

const Choice = styled.input`
  appearance: none;
  width: 13px;
  height: 13px;
  border: 1px solid #444;
  background: #fff;
  ${(p) => p.type === "radio" && css`
    border-radius: 50%;
    &:checked { background: radial-gradient(#222 3px, #fff 4px); }
  `}
`;

const ValueFrame = styled.div`
  margin-top: 3px;
  height: 222px;
  display: flex;
  flex-direction: column;
  border: 1px solid #cfcfcf;
`;

const ValueTable = styled.table`
  width: 100%;
  height: 199px;
  border-collapse: collapse;
  table-layout: fixed;
  th, td { padding: 0; border-bottom: 1px solid #e6e6e6; border-right: 1px solid #dedede; text-align: left; font-weight: normal; }
  td { height: 19px; }
  th { height: 22px; padding-left: 5px; background: #f0f0f0; }
  th + th { padding-left: 7px; }
  td + td { padding-left: 4px; }
`;

const ValueRow = styled.tr`
  color: ${(p) => (p.$alert ? "#e34b3e" : "inherit")};
  && td + td { ${(p) => p.$edit && "padding: 0;"} }
`;

const NameCell = styled.div`
  display: flex;
  align-items: center;
  gap: 1px;
  height: 18px;
`;

const CellInput = styled.input`
  display: block;
  width: 100%;
  height: 18px;
  padding: 0 2px;
  border: solid #555;
  border-width: 0 1px 1px 0;
  outline: 0;
  &::selection { background: #0a6fd0; color: #fff; }
`;

const EditCell = styled.div`
  position: relative;
`;

const Beam = styled.span`
  position: absolute;
  left: 36px;
  top: 0;
`;

const Combo = styled(SelectShell)`
  margin-left: auto;
`;

const ComboInput = styled.input`
  width: 78px;
  padding: 0 3px;
  border: 0;
  background: none;
`;

const MoreOptions = styled.button`
  height: 18px;
  margin: 2px 0 0;
  border-bottom: 1px solid #d0d0d0;
`;

const Actions = styled.div`
  display: flex;
  justify-content: flex-end;
  gap: 5px;
  padding: 8px 14px;
`;

const Action = styled.button`
  width: 53px;
  height: 25px;
  border: 1px solid ${(p) => (p.$main ? "#70b2c3" : "#b3b3b3")};
  background: ${(p) => (p.$main ? "#70b2c3" : "#e1e1e1")};
  color: ${(p) => (p.$main ? "#fff" : "#222")};
`;

const InfoDialog = styled.section`
  position: absolute;
  left: 715px;
  top: 194px;
  width: 411px;
  background: #f0f0f0;
  border: solid #b5babd;
  border-width: 0 1px 1px 0;
`;

const InfoTitle = styled(DialogTitle)`
  justify-content: space-between;
  height: 27px;
  padding: 0 2px 0 8px;
  font-size: 12px;
`;

const Picture = styled.svg`
  display: block;
  margin: 5px 6px;
`;

const InfoText = styled.p`
  padding: 2px 10px 14px;
`;

/* ---------- overlays ---------- */

const Banner = styled.p`
  position: absolute;
  left: 427px;
  top: 0;
  display: flex;
  gap: 10px;
  font: bold 24px/28px "DejaVu Sans", "Noto Sans CJK SC", sans-serif;
  color: #f9b8c2;
  -webkit-text-stroke: 3px #c81f43;
  paint-order: stroke fill;
  white-space: nowrap;
  pointer-events: none;
`;

const BannerName = styled.span`
  font-weight: 500;
`;

const BannerSite = styled.span`
  color: #fff;
`;

const ClassMark = styled.div`
  position: absolute;
  right: 46px;
  top: 14px;
  display: flex;
  align-items: center;
  gap: 12px;
  font: 400 36px/52px "Noto Sans CJK SC", sans-serif;
  color: #fbfbfb;
  text-shadow: 0 0 1px #777, 1px 1px 1px #8a8a8a, -1px -1px 1px #aaa;
  pointer-events: none;
`;

const SiteMark = styled.div`
  position: absolute;
  right: 6px;
  bottom: 3px;
  display: flex;
  align-items: flex-end;
  gap: 8px;
  color: #20207c;
`;

const SiteNames = styled.div`
  display: flex;
  flex-direction: column;
  align-items: center;
  gap: 4px;
`;

const SiteName = styled.span`
  font: bold 24px/30px "Noto Sans CJK SC", sans-serif;
`;

const SiteUrl = styled.span`
  padding: 0 3px;
  background: #20207c;
  color: #fff;
  font: bold 14px/15px "Liberation Sans", sans-serif;
`;

/* ---------- drawings ---------- */

const Chevron = ({ w = 10, c = "currentColor", d = "M1 8l5-6 5 6" }) => (
  <Svg width={w} height={w} viewBox="0 0 12 10" fill="none" stroke={c} strokeWidth="2"><path d={d} /></Svg>
);

const Cross = ({ size = 12, c = "currentColor" }) => (
  <Svg width={size} height={size} viewBox="0 0 12 12" stroke={c} strokeWidth="2"><path d="M1 1l10 10M11 1L1 11" /></Svg>
);

const coils = [0, 1, 2, 3, 4];

const Spring = ({ x, y }) => (
  <g transform={`translate(${x} ${y})`} stroke="#8e959c" strokeWidth="1.2" fill="none">
    {coils.map((i) => (
      <g key={i} transform={`translate(${-2.3 * i} ${18.6 * i})`}>
        <path d="M48 12Q46 20 28 22 16 23 8 22V27l34-1 16-8-6-6z" fill="#e6e8ea" stroke="none" />
        <path d="M10 4Q30 9 48 4L56 0h6v7Q54 16 34 16 16 16 9 12z" fill="#d6dae0" stroke="none" />
        <path d="M10 4Q32 8 48 4L56 0h6" stroke={i ? "none" : "#8e959c"} />
        <path d="M62 1v6Q54 16 34 16 16 16 8 12M48 14Q46 20 24 21" />
      </g>
    ))}
    <path d="M38 91Q36 98 16 98 8 100 13 106 32 110 47 105 51 100 50 94z" fill="#dfe2e5" />
  </g>
);

const rods = [
  [575, 470, 562, 604], [592, 473, 572, 614], [607, 478, 594, 591], [622, 482, 611, 586], [638, 486, 627, 581],
  [648, 489, 633, 630], [663, 492, 646, 643], [680, 496, 663, 638], [696, 500, 680, 632], [711, 502, 694, 645],
  [729, 497, 714, 621], [746, 492, 731, 616], [762, 487, 745, 610], [778, 480, 766, 584],
];

const Scene = () => (
  <Svg width="774" height="499" viewBox="560 199 774 499">
    <path d="M590 473l-8 105h6l9-104zM708 500l-10 112h6l12-113z" fill="#a4ccd6" opacity=".8" />
    <path d="M642 484l19 5-13 124h-19z" fill="#dccdb0" />
    <ellipse cx="636" cy="608" rx="13" ry="6" fill="#ddd5bd" stroke="#aaa18a" />
    <path d="M623 608v9q13 8 25 0v-9q-12 7-25 0z" fill="#e3ddc8" stroke="#aaa18a" />
    {rods.map(([a, b, c, d]) => (
      <g key={a}>
        <path d={`M${a} ${b}L${c} ${d}`} stroke="#9ac7d0" strokeWidth="2.4" opacity=".85" />
        <path d={`M${c - 4} ${d}h9v4h-9zM${c - 3} ${d + 5}h8v4h-8z`} fill="#c9c5bb" stroke="#99958f" strokeWidth=".8" />
      </g>
    ))}
    <Spring x={745} y={549} />
    <Spring x={836} y={520} />
    <path d="M560 307l53-16 232 60v107l-136 44-149-37z" fill="#a4a6a9" opacity=".45" />
    <path d="M560 355l40 9 115 28v82l-5 28-150-37z" fill="#a5b0aa" opacity=".3" />
    <path d="M560 438l150 36 62-17h73l-136 45-149-37z" fill="#939396" opacity=".45" />
    <path d="M609 240q2 26 2 21 10 18 64 20h50v-45z" fill="#d6cba8" stroke="#aba386" />
    <ellipse cx="677" cy="243" rx="69" ry="21" fill="#dfd2aa" stroke="#a39b80" />
    <ellipse cx="680" cy="241" rx="38" ry="10" fill="#cfd3d2" stroke="#8d8a78" />
    <path d="M612 248q20 15 64 18h44M660 231" fill="none" stroke="#aaa184" />
    <path d="M645 252l7-3 8 2-5 3zM703 230l6-2 8 2-5 2z" fill="#a59c80" />
    <path d="M659 280h26l-5 64h-20z" fill="#d3caaf" opacity=".9" />
    <path d="M560 307l53-16 102 27M562 316l106 26M682 338l33-10M560 355l40 9 65-21M600 364l115 28M600 364l-12 109M565 438l145 36 62-17M560 465l149 37 136-44M715 457l-6 45M779 457l-2 23M665 343l50 10" fill="none" stroke="#909395" strokeWidth="1" />
    <path d="M605 421l110 4M645 409l28 28M722 487q0-6 4-9" stroke="#8c9698" fill="none" />
    <path d="M665 371l4 10-9 41-2-1z" fill="#2345b8" />
    <path d="M659 422l-22 3-4 7 10-1z" fill="#b53a3e" />
    <path d="M659 422l32 6 14 7-13 1z" fill="#3e8948" />
    <g fontFamily="Liberation Sans, sans-serif" fontSize="14">
      <text x="646" y="369" fill="#3f58bd">ZC</text>
      <text x="632" y="445" fill="#b8484b">XC</text>
      <text x="691" y="450" fill="#5d7d5f">YC</text>
    </g>
  </Svg>
);

const PlugDrawing = () => (
  <Picture width="398" height="194" viewBox="721 226 398 194" stroke="#000">
    <rect x="721" y="226" width="398" height="194" fill="#fdfdfd" stroke="none" />
    <rect x="735.5" y="229.5" width="376" height="187" fill="#f0f0f0" />
    <path d="M737 270.5h131M746 266l-9 4.500 9 4.500M955 270.500h101M1048 266l8 4.500-8 4.500M1056.500 265v27" fill="none" />
    <text x="882" y="275" fontSize="13" fontFamily="Liberation Sans, sans-serif" stroke="none">ENGAGE</text>
    <path d="M736 294.500h70l2 3v48l-2 2.500h-70z" fill="#0ff" />
    <path d="M809.500 297.500h269l13 24-13 24h-269z" fill="#00827c" />
    <path d="M1078.500 297.500v48" />
    <path d="M998 297.500h54l4.500 6v36l-4.500 6h-54l-4.500-6v-36z" fill="#f0f" />
    <path d="M998.500 297.500v48M1051.500 297.500v48M733 321.500h364" />
  </Picture>
);

const MoldMark = () => (
  <Svg width="58" height="52" viewBox="0 0 58 52">
    <path d="M11 30l28-8 10 8v8L32 52 11 40z" fill="#8492e8" opacity=".85" />
    <path d="M0 22L26 2l32 18-24 22-24-6 1-7z" fill="#4dbbe4" opacity=".95" />
    <path d="M25 14l14 8-14 8z" fill="#e8f7fd" />
  </Svg>
);

const ITMark = () => (
  <Svg width="44" height="46" viewBox="0 0 44 46" fill="#20207c">
    <path d="M3 4l5-3v4l-5 6zM3 14l5-6v6l-5 5zM3 22l5-5v23h9V15h-7v-4h34v5H27v29H3z" />
    <path d="M17 16h5v24h-5z" />
  </Svg>
);

const ParamIcon = ({ engage }) => (
  <Svg width="15" height="15" viewBox="0 0 15 15" fontFamily="Liberation Sans, sans-serif" fontWeight="bold">
    {engage ? (
      <g><path d="M0 10h4l3-3v7l-3-3M7 7h3v7H7M10 10h4" fill="#ddd" stroke="#333" /><text x="5" y="6" fontSize="7" fill="#222">1.2</text></g>
    ) : (
      <g><path d="M.5.500h14v14H.500z" fill="#fff" stroke="#6a65b8" /><text x="2" y="7" fontSize="6" fill="#26268c">P1=</text><text x="2" y="13" fontSize="6" fill="#26268c">P2=</text></g>
    )}
  </Svg>
);

const FormulaIcon = () => (
  <Svg width="28" height="28" viewBox="0 0 28 28">
    <text x="2" y="8" fontSize="8" fontWeight="bold" fontFamily="Liberation Sans, sans-serif" fill="#22227e">P4</text>
    <path d="M14 6l10 6M24 12v-4M24 12h-4M14 6h4M14 6v3" stroke="#22227e" fill="none" strokeWidth="1.500" />
    <path d="M6 15l6-4 8 2-6 4z" fill="#fbf9b8" stroke="#333" />
    <path d="M6 15l8 2v9l-8-3z" fill="#f0ea70" stroke="#333" />
    <path d="M14 17l6-4v9l-6 4z" fill="#b7b04c" stroke="#333" />
  </Svg>
);

/* ---------- data ---------- */

const coveredTools = ["layout", "csys", ...Array(10).fill(null), "redArrow", "balance", "wall", ...Array(10).fill(null), "house"];
const moldTools = ["boxRed", "splitBlue", "cross", "redTop", "patch", "surface", "fence", "slab", "hammer", "hammerCube", "linkCheck",
  "boxGold", "splitRed", "tree", "insert", "wire", "palette", "refsq", "block", "solids", "cubeArrow", "greyPlates"];
const snapTools = ["sGhost", "sCube", "sSnap", "sLine", "sMid", "sCurve", "sSpline", "sWave", "sPeak", "sCenter", "sQuad", "sPlus", "sLine", "sFace", "sPlane", "sGrid"];
const viewTools = ["vFit", "vWin", "vRot", "vBrush", "vTree"];
const viewMenus = ["vGrid", "vSolid", "vCube", "vMove"];
const members = ["PIPE PLUG", "BAFFLE", "BAFFLE_AUTO", "BAFFLE SPIRAL", "CONNECTOR PLUG", "EXTENSION PLUG", "DIVERTER", "O-RING", "COOLING_PATTERN"];
const values = [
  { name: "SUPPLIER", value: "DME", kind: "list" },
  { name: "FITTING_DIA", value: "8", kind: "list" },
  { name: "ENGAGE", value: "10", kind: "engage" },
  { name: "CATALOG", value: "TBP-10", kind: "param" },
  { name: "PLUG_DIA", value: "8", kind: "param" },
  { name: "PLUG_LENGTH", value: "12.7", kind: "param", edit: true },
  { name: "MATERIAL", value: "BRASS", kind: "param" },
];
const rail = [
  { icon: "gear", h: 26, after: 15, size: 16 }, { icon: "rAsm", h: 41, size: 22 }, { icon: "rCon", h: 41, size: 22 }, { icon: "rPart", h: 41, size: 22 },
  { icon: "rBooks", h: 43, size: 24, on: true }, { icon: "rEye", h: 37, after: 9, size: 22 }, { icon: "rInfo", h: 53, size: 24 },
  { icon: "rPage", h: 53, size: 24 }, { icon: "rClock", h: 53, size: 22 }, { icon: "rColor", h: 30, size: 22 }, { icon: "rWave", h: 22, size: 26 },
];

const Dropdown = ({ id, w, h, options, dim, label }) => (
  <SelectShell $w={w} $h={h}>
    <Select id={id} aria-label={label}>{options.map((o) => <option key={o}>{o}</option>)}</Select>
    <Caret $mid $dim={dim} />
  </SelectShell>
);

const DetailTable = () => {
  const input = useRef(null);
  useEffect(() => {
    input.current.focus();
    input.current.select();
  }, []);
  return (
    <ValueFrame>
      <ValueTable>
        <colgroup><col width="144" /><col /></colgroup>
        <thead><tr><th>名称</th><th>值</th></tr></thead>
        <tbody>
          {values.map((v) => (
            <ValueRow key={v.name} $alert={v.kind === "engage"} $edit={v.edit}>
              <td>
                <NameCell>
                  <Icon name="lock" size={14} />
                  {v.kind === "list" ? <Icon name="greenDown" size={15} /> : <ParamIcon engage={v.kind === "engage"} />}
                  <RowText $on={v.edit}>{v.name}</RowText>
                </NameCell>
              </td>
              <td>
                {v.edit ? (
                  <EditCell>
                    <CellInput ref={input} defaultValue={v.value} aria-label={v.name} />
                    <Beam><Icon name="cursor" size={18} /></Beam>
                  </EditCell>
                ) : v.value}
              </td>
            </ValueRow>
          ))}
          <tr><td /><td /></tr>
          <tr><td /><td /></tr>
        </tbody>
      </ValueTable>
      <Scroll>
        <ScrollArrow $w={21} aria-label="左"><Chevron w={9} d="M8 0L3 5l5 5" c="#444" /></ScrollArrow>
        <Thumb $w="252px" />
        <ScrollArrow aria-label="右"><Chevron w={9} d="M4 0l5 5-5 5" c="#444" /></ScrollArrow>
      </Scroll>
    </ValueFrame>
  );
};

export default function App() {
  return (
    <Window>
      <GlobalStyle />
      <TitleBar>
        <Brand>NX</Brand>
        <Rule />
        <QuickButton $w={34} aria-label="保存"><Icon name="save" size={20} /></QuickButton>
        <QuickButton aria-label="撤销"><Icon name="undo" size={16} /></QuickButton>
        <QuickButton $w={12} aria-label="撤销列表"><Caret /></QuickButton>
        <QuickButton aria-label="重做"><Icon name="redo" size={16} /></QuickButton>
        <Rule />
        <QuickButton $w={30} aria-label="剪切"><Icon name="cut" size={18} /></QuickButton>
        <QuickButton $w={16} aria-label="复制"><Icon name="copy" size={18} /></QuickButton>
        <QuickButton $w={28} aria-label="粘贴"><Icon name="paste" size={19} /></QuickButton>
        <QuickButton aria-label="冷却"><Icon name="cooling" size={18} /></QuickButton>
        <Push />
        <Siemens>SIEMENS</Siemens>
        <WinButton aria-label="最小化"><Svg width="8" height="12" viewBox="0 0 8 12"><path d="M0 10h8" stroke="#333" strokeWidth="2" /></Svg></WinButton>
        <WinButton aria-label="还原"><Svg width="13" height="11" viewBox="0 0 13 11" fill="none" stroke="#333" strokeWidth="1.500"><path d="M1 4h8v6H1zM4 4V1h8v6H9" /></Svg></WinButton>
        <WinButton aria-label="关闭"><Cross /></WinButton>
      </TitleBar>
      <TabBar>
        <RibbonTab $file $w={79}>文件(F)</RibbonTab>
        <RibbonTab>主页</RibbonTab>
        <RibbonTab>装配</RibbonTab>
        <RibbonTab>曲线</RibbonTab>
        <CoveredTabs />
        <RibbonTab $active $w={90}>注塑模向导</RibbonTab>
        <Push />
        <TabTools>
          <FindBox aria-label="查找命令" />
          <Icon name="search" size={16} />
          <Icon name="monitor" size={16} />
          <Chevron w={13} c="#444" />
          <Icon name="help" size={14} />
        </TabTools>
      </TabBar>
      <Ribbon>
        <LaunchButton><Icon name="init" size={32} box={32} />初始化项目</LaunchButton>
        <RibbonGroup label="部件验证" cols={2} tools={["partCheck", "draftCheck", "heat", "press"]} />
        <RibbonGroup label="" cols={13} w={407} tools={coveredTools} />
        <RibbonGroup label="冷却工具" cols={4} tools={["pipeX", "elbow", "plugs", "valve", "circuit"]} up />
        <RibbonGroup label="注塑模工具" cols={11} tools={moldTools} />
        <RibbonGroup label="模具..." cols={1} tools={["subCheck", "moldbase"]} />
        <RibbonGroup label="模具图纸" cols={3} tools={["sheet1", "sheet2", "sheet3", "crossO", "ladder", "grid"]} />
        <BarEnd $h={84}><Caret /></BarEnd>
      </Ribbon>
      <SelectionBar>
        <MenuButton><Icon name="menu" size={16} />菜单(M)<Caret /></MenuButton>
        <FilterSlot><Dropdown w={129} h={19} options={[""]} dim label="选择过滤器" /></FilterSlot>
        <SnapTools>
          {snapTools.map((t, i) => <SmallTool key={i} aria-label={t}><Icon name={t} size={17} /></SmallTool>)}
        </SnapTools>
        <Rule />
        <ViewTools>
          {viewTools.map((t) => <SmallTool key={t} aria-label={t}><Icon name={t} size={17} /></SmallTool>)}
          {viewMenus.map((t) => <SmallTool key={t} $menu aria-label={t}><Icon name={t} size={17} /><Caret /></SmallTool>)}
        </ViewTools>
        <Rule />
        <BarEnd $h={30}><Caret /></BarEnd>
      </SelectionBar>
      <Work>
        <Rail>
          {rail.map((r) => (
            <RailButton key={r.icon} $h={r.h} $after={r.after} $on={r.on} aria-label={r.icon}><Icon name={r.icon} size={r.size} /></RailButton>
          ))}
          <RailSteps><Caret $up $dim /><Caret $up $dim /><Caret /><MoreCaret /></RailSteps>
        </Rail>
        <Library>
          <PanelTitle>重用库</PanelTitle>
          <ListHead $h={23}>名称</ListHead>
          <Tree>
            <TreeRow><Toggle>-</Toggle><Icon name="cooling" size={16} /><RowText>MW Cooling Standard Library</RowText></TreeRow>
            <TreeRow $indent={37}><Icon name="folder" size={15} /><RowText $on>COOLING</RowText></TreeRow>
            <TreeRow /><TreeRow /><TreeRow />
            <Scroll>
              <ScrollArrow aria-label="左"><Chevron w={9} d="M8 0L3 5l5 5" c="#444" /></ScrollArrow>
              <Thumb $w="153px" />
            </Scroll>
          </Tree>
          <SectionBar $top={5} $h={28}>搜索</SectionBar>
          <SectionBar $h={27}>成员选择</SectionBar>
          <MemberTools>
            <DropButton aria-label="视图"><Icon name="tableBtn" size={22} /><Caret $mid /></DropButton>
            <DropButton aria-label="过滤"><Icon name="filter" size={22} /><Caret $mid /></DropButton>
            <DropButton $w={31} aria-label="首页"><Icon name="first" size={15} /></DropButton>
            <Count>1-11，共 11</Count>
          </MemberTools>
          <Members>
            <ListHead>名称</ListHead>
            <MemberRows>
              {members.map((m) => (
                <MemberRow key={m}><Icon name="part" size={16} /><RowText $on={m === "DIVERTER"}>{m}</RowText></MemberRow>
              ))}
            </MemberRows>
            <Scroll>
              <ScrollArrow aria-label="左"><Chevron w={9} d="M8 0L3 5l5 5" c="#444" /></ScrollArrow>
              <Thumb $w="98px" />
            </Scroll>
          </Members>
          <SectionBar $h={23}>预览</SectionBar>
          <SectionBar $h={6} as="div" />
        </Library>
        <Stage>
          <DocTabs><DocTab>t<Icon name="docEdit" size={13} /><Cross size={9} c="#8eb3bd" /></DocTab></DocTabs>
          <Canvas><Scene /></Canvas>
        </Stage>
      </Work>
      <StatusBar>输入新表达式值</StatusBar>

      <Dialog>
        <DialogTitle><Icon name="gear" size={16} />冷却组件设计<Push /><Cross size={11} /></DialogTitle>
        <PickRow>
          <Icon name="check" size={14} />选择项 (DIVERTER)
          <Push />
          <SquareButton aria-label="重用库"><Icon name="books2" size={24} /></SquareButton>
        </PickRow>
        <Section>
          <SectionTitle>部件<Chevron w={12} /></SectionTitle>
          <FormRow $h={36}>选择标准件 (0)<Push /><SquareButton aria-label="选择标准件"><Icon name="target" size={20} /></SquareButton></FormRow>
          <FormRow $h={24}>
            <FieldLabel><Choice type="radio" name="mode" defaultChecked />添加实例</FieldLabel>
            <FieldLabel><Choice type="radio" name="mode" />新建组件</FieldLabel>
          </FormRow>
          <FormRow $h={20}><FieldLabel><Choice type="checkbox" />重命名组件</FieldLabel></FormRow>
          <FormRow $h={34} $end>
            <SquareButton aria-label="帮助"><Icon name="question" size={20} /></SquareButton>
            <SquareButton $lit aria-label="信息"><Icon name="info" size={20} /></SquareButton>
          </FormRow>
        </Section>
        <Section>
          <SectionTitle>放置<Chevron w={12} /></SectionTitle>
          <FormRow $h={30}><FieldLabel htmlFor="parent" $w={152}>父</FieldLabel><Dropdown id="parent" w={138} options={["5.2_cool_hole_097"]} /></FormRow>
          <FormRow $h={24}><FieldLabel htmlFor="position" $w={152}>位置</FieldLabel><Dropdown id="position" w={138} options={["PLANE"]} /></FormRow>
          <FormRow $h={36}><Icon name="check" size={15} />选择面或平面 (1)<Push /><SquareButton aria-label="选择面或平面"><Icon name="target" size={20} /></SquareButton></FormRow>
          <FormRow $h={26}><FieldLabel htmlFor="refset" $w={152}>引用集</FieldLabel><Dropdown id="refset" w={138} options={["TRUE"]} /></FormRow>
        </Section>
        <Section $flush>
          <SectionTitle>详细信息<Chevron w={12} /></SectionTitle>
          <DetailTable />
          <FormRow $h={42}>
            <FieldLabel htmlFor="length">PLUG_LENGTH</FieldLabel>
            <Combo $w={138}>
              <ComboInput id="length" defaultValue="12.7" />
              <Select aria-label="单位"><option>mm</option></Select>
              <Caret $mid />
            </Combo>
            <SquareButton aria-label="公式"><FormulaIcon /></SquareButton>
          </FormRow>
        </Section>
        <MoreOptions aria-label="更多"><Caret $big /></MoreOptions>
        <Actions><Action>确定</Action><Action $main>应用</Action><Action>取消</Action></Actions>
      </Dialog>

      <InfoDialog>
        <InfoTitle>信息<WinButton aria-label="关闭"><Cross c="#fff" /></WinButton></InfoTitle>
        <PlugDrawing />
        <InfoText>CATALOG=TBP-10</InfoText>
      </InfoDialog>

      <Banner><BannerName>机电教程园</BannerName><BannerSite>www.jdjcy.com</BannerSite><BannerName>原创教程</BannerName></Banner>
      <ClassMark><MoldMark />腾讯课堂</ClassMark>
      <SiteMark>
        <ITMark />
        <SiteNames><SiteName>机电教程园</SiteName><SiteUrl>WWW.JDJCY.COM</SiteUrl></SiteNames>
      </SiteMark>
    </Window>
  );
}
